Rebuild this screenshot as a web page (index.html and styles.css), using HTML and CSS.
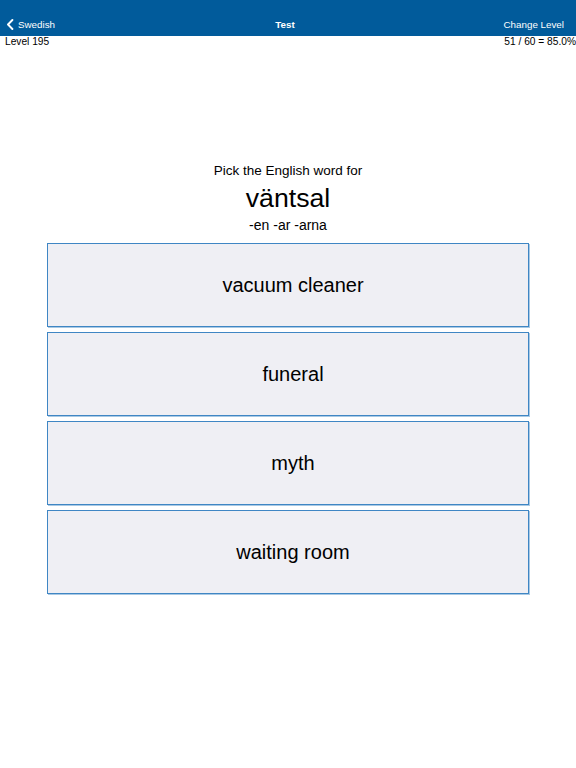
FILE: index.html
```html
<!DOCTYPE html>
<html>
<head>
<meta charset="utf-8">
<link rel="stylesheet" href="styles.css">
</head>
<body>
<header class="navbar">
  <div class="nav-left">
    <svg class="chev" width="8" height="11" viewBox="0 0 8 11"><path d="M6.4 1 L2 5.5 L6.4 10" fill="none" stroke="#fff" stroke-width="1.9" stroke-linecap="round" stroke-linejoin="round"/></svg>
    <span>Swedish</span>
  </div>
  <div class="nav-title">Test</div>
  <div class="nav-right">Change Level</div>
</header>
<div class="status">
  <span>Level 195</span>
  <span>51 / 60 = 85.0%</span>
</div>
<main class="quiz">
  <div class="prompt">Pick the English word for</div>
  <div class="word">väntsal</div>
  <div class="forms">-en -ar -arna</div>
  <div class="options">
    <div class="option">vacuum cleaner</div>
    <div class="option">funeral</div>
    <div class="option">myth</div>
    <div class="option">waiting room</div>
  </div>
</main>
</body>
</html>
```
FILE: styles.css
```css
* { box-sizing: border-box; }
html, body { margin: 0; padding: 0; background: #fff; }
body {
  font-family: "Liberation Sans", Arial, sans-serif;
  color: #000;
  width: 576px;
  height: 768px;
}
.navbar {
  height: 36px;
  background: #015b9b;
  color: #fff;
  display: grid;
  grid-template-columns: 1fr auto 1fr;
  align-items: center;
  padding: 13px 12px 0 6px;
  font-size: 9.8px;
}
.nav-left { display: flex; align-items: center; gap: 4px; }
.nav-title { font-weight: bold; font-size: 9.8px; }
.nav-right { justify-self: end; }
.status {
  display: flex;
  justify-content: space-between;
  padding: 0 0 0 5px;
  font-size: 10.2px;
  line-height: 12px;
  margin-top: 0;
}
.quiz {
  display: flex;
  flex-direction: column;
  align-items: center;
  padding-top: 114px;
}
.prompt { font-size: 13.5px; line-height: 17px; }
.word { font-size: 26.7px; line-height: 30px; margin-top: 4px; }
.forms { font-size: 14px; line-height: 16px; margin-top: 4px; }
.options {
  margin-top: 10px;
  margin-left: 47px;
  width: 482px;
  align-self: flex-start;
  display: flex;
  flex-direction: column;
  gap: 5px;
}
.option {
  height: 84px;
  background: #efeff4;
  border: 1px solid #3f86c4;
  box-shadow: 1px 1px 0 #a9c9e4;
  display: flex;
  align-items: center;
  justify-content: center;
  font-size: 20px;
  padding-left: 10px;
}
```
